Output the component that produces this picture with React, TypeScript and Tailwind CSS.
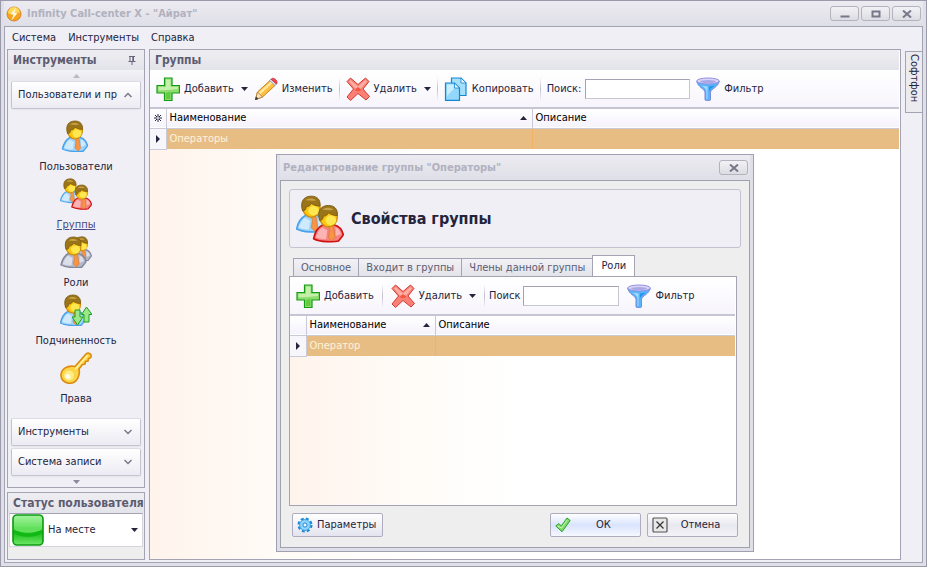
import type { ReactNode } from "react";

type Shirt = "blue" | "red" | "gray";

const shirts: Record<Shirt, { fill: string; light: string; line: string }> = {
  blue: { fill: "#9dd3fb", light: "#cfeafd", line: "#4aa3ea" },
  red: { fill: "#f98080", light: "#fbb3b3", line: "#cf1010" },
  gray: { fill: "#b4b8c8", light: "#dcdfe9", line: "#83879b" },
};

function Person({ shirt, transform }: { shirt: Shirt; transform?: string }) {
  const c = shirts[shirt];
  return (
    <g transform={transform}>
      <path d="M10 17.500 C6 19.500 3.500 24 2.500 29 C8 32 20 32 23.500 31 C25 29 27 27 27.500 25.500 C26.500 21.500 24 18.500 20 17.500 Z" fill={c.fill} stroke={c.line} strokeWidth="1.400" />
      <path d="M9.500 19.500 C7 21.500 5 25 4.300 28 C7 29 10 29.500 13 29.500 L14 22 Z M21 19.500 L21 27 L25.500 25 C25 22.500 23.500 20.500 21 19.500 Z" fill={c.light} />
      <path d="M15 18.500 L19 18.500 L20.500 28 L18 31 L15 28 L16 22 Z" fill="#f79545" stroke="#d9772c" strokeWidth="0.600" />
      <ellipse cx="15" cy="10.500" rx="7.500" ry="8.500" fill="#fcc713" stroke="#cf8d12" strokeWidth="1.200" />
      <ellipse cx="17" cy="13.500" rx="4.500" ry="4" fill="#ffe84f" />
      <path d="M7.500 13.500 C5 5 9 1 15 1 C20 1 23 4 22.500 9.500 C19 9.500 17 8.500 15 7 C14 10 11 10 10.500 10 C11 12 9 14 7.500 13.500 Z" fill="#9a7419" stroke="#7b5b12" strokeWidth="0.800" />
      <path d="M10 4.500 C12 2.500 17 2.500 19 4.500 C16 5.500 13 4.500 10 4.500 Z" fill="#c7a24a" />
    </g>
  );
}

function UserIcon() {
  return (
    <svg viewBox="0 0 32 32" className="size-8">
      <Person shirt="blue" />
    </svg>
  );
}

function GroupIcon({ className = "size-8" }: { className?: string }) {
  return (
    <svg viewBox="0 0 32 32" className={className}>
      <Person shirt="blue" transform="translate(-1.500 0) scale(0.780)" />
      <Person shirt="red" transform="translate(9.800 6.200) scale(0.790)" />
    </svg>
  );
}

function RolesIcon() {
  return (
    <svg viewBox="0 0 32 32" className="size-8">
      <Person shirt="gray" transform="translate(10 0) scale(0.780)" />
      <Person shirt="gray" transform="translate(-1.500 0)" />
    </svg>
  );
}

function SubordinationIcon() {
  return (
    <svg viewBox="0 0 32 32" className="size-8">
      <Person shirt="blue" transform="translate(-2 0)" />
      <path d="M15 16 H20 V23 H23 L17.500 31 L12 23 H15 Z" fill="#9be88b" stroke="#1f9f1c" />
      <path d="M24 28 H29 V20.500 H32 L26.500 13 L21.500 20.500 H24 Z" fill="#9be88b" stroke="#1f9f1c" />
    </svg>
  );
}

function KeyIcon() {
  return (
    <svg viewBox="0 0 32 32" className="size-8">
      <path d="M15 14.500 L26 2 C28 0 32 1.500 31 5 L30 6 L28.500 6.500 L28 9 L25.500 9.500 L25 12 L22.500 12.500 L19 17 C20.500 23 17 31 10 31.300 C4 31.500 0.700 27 1 22.500 C1.500 17 7 13 15 14.500 Z" fill="#fcd547" stroke="#dd8a10" strokeWidth="1.600" />
      <path d="M27.500 3.500 L15.500 17" stroke="#fff3a6" strokeWidth="1.600" />
      <circle cx="9" cy="23.500" r="5" fill="#ffec84" />
      <circle cx="8" cy="24.500" r="2.400" fill="#fffbe8" />
    </svg>
  );
}

function AddIcon() {
  return (
    <svg viewBox="0 0 24 24" className="size-6 shrink-0">
      <path d="M8.500 1 H16 V8.500 H23.500 V16 H16 V23.500 H8.500 V16 H1 V8.500 H8.500 Z" fill="#8fdc70" stroke="#169a16" strokeWidth="1.200" />
      <path d="M10 2.500 H14.500 V10 H22 V12 C16 12 10 14 2.500 13 V10 H10 Z" fill="#c5f0ac" />
      <path d="M10 16 L14.500 14.500 V22 H10 Z" fill="#62cb42" />
    </svg>
  );
}

function EditIcon() {
  return (
    <svg viewBox="0 0 24 24" className="size-6 shrink-0">
      <path d="M1.500 22.500 L3.500 15 L16.500 3 L21.500 8 L8.500 20 Z" fill="#fdbf3f" stroke="#c98224" />
      <path d="M4.500 15.500 L17 4.500 L18.500 6 L6 17.500 Z" fill="#ffeaa0" />
      <path d="M1.500 22.500 L3.500 15 L8.500 20 Z" fill="#fbe2b8" stroke="#a0702c" strokeWidth="0.700" />
      <path d="M1 23 L2 19.500 L4.500 22 Z" fill="#333" />
      <path d="M15.500 3.500 L17 2 L22.500 7 L21 8.500 Z" fill="#dfe3ef" stroke="#8d8fa0" strokeWidth="0.700" />
      <path d="M17.500 1.800 C19 0 24 3 23 6.300 L22.300 7 L17 2.300 Z" fill="#ee4850" stroke="#c42a38" strokeWidth="0.700" />
    </svg>
  );
}

function DeleteIcon() {
  return (
    <svg viewBox="0 0 24 24" className="size-6 shrink-0">
      <path d="M1 4.500 L4.500 1 L12 7.500 L19.500 1 L23 4.500 L17 12 L23.500 19.500 L20 23 L12 16.500 L4.500 23.500 L1 20 L7.500 12 Z" fill="#f98074" stroke="#d23a36" />
      <path d="M3 4.500 L4.500 3 L12 9.500 L19.500 3 L21 4.500 L15 11.500 L9 11.500 Z" fill="#fcaea2" />
      <path d="M12 10 L15.500 13 L12 14.500 L8.500 13 Z" fill="#f4573f" />
    </svg>
  );
}

function CopyIcon() {
  return (
    <svg viewBox="0 0 24 24" className="size-6 shrink-0">
      <path d="M7.500 1 H17 L22 6 V18.500 H7.500 Z" fill="#a5e0fb" stroke="#1487d4" strokeWidth="1.200" />
      <path d="M17 1 V6 H22 Z" fill="#eefaff" stroke="#1487d4" strokeWidth="0.800" />
      <path d="M1.500 6 H10.500 L15.500 11 V23.400 H1.500 Z" fill="#93d8fb" stroke="#1487d4" strokeWidth="1.200" />
      <path d="M3 7.500 H9.500 L10 11.500 L3 19 Z" fill="#c9eefd" />
      <path d="M10.500 6 V11 H15.500 Z" fill="#eefaff" stroke="#1487d4" strokeWidth="0.800" />
    </svg>
  );
}

function FilterIcon() {
  return (
    <svg viewBox="0 0 24 24" className="size-6 shrink-0">
      <path d="M0.700 4.500 C2 10 8.500 12 9 15 V23 C11 24 13 24 14.500 23 V15 C15 12 22 10 23.300 4.500 Z" fill="#58b4f8" stroke="#7a86e0" />
      <path d="M5 8.500 C9 10.500 10.500 12 10.500 15 V22 H11.500 V9.500 Z" fill="#a8dcff" />
      <path d="M13 9.500 L19 8.500 C15 11.500 13.500 13 13 15 Z" fill="#2496ee" />
      <ellipse cx="12" cy="4" rx="11.300" ry="3" fill="#d9d5f8" stroke="#958fe0" />
      <ellipse cx="12" cy="4.600" rx="8" ry="1.500" fill="#aaa7e6" />
    </svg>
  );
}

function LogoIcon() {
  return (
    <svg viewBox="0 0 16 16" className="size-4">
      <circle cx="8" cy="8" r="7" fill="#f9a21c" stroke="#c87a1c" strokeWidth="0.800" />
      <path d="M2 7 A6 6 0 0 1 14 7 C10 5 6 10 2 7 Z" fill="#ffd95a" />
      <path d="M10 1.500 L4.500 8.500 L7.500 8.500 L5.500 14.500 L11.500 7 L8.500 7 Z" fill="#fffbe0" />
    </svg>
  );
}

function GearIcon() {
  return (
    <svg viewBox="0 0 16 16" className="size-4 shrink-0">
      <circle cx="8" cy="8" r="6.300" fill="none" stroke="#1c88d6" strokeWidth="2.400" strokeDasharray="2.900 2.048" />
      <circle cx="8" cy="8" r="5.400" fill="#8fd4fa" stroke="#3ba2e6" />
      <circle cx="8" cy="8" r="2.100" fill="#f0f4fa" stroke="#1c88d6" />
    </svg>
  );
}

function CheckIcon() {
  return (
    <svg viewBox="0 0 16 16" className="size-4 shrink-0">
      <path d="M0.800 9 L3.800 6.500 L6.300 9 L12 1 L15.200 3.500 L7 14.800 Z" fill="#7fdc68" stroke="#2d9f2b" />
      <path d="M2.500 9 L6.500 11 L12 3" stroke="#c8f5b5" fill="none" />
    </svg>
  );
}

function CancelIcon() {
  return (
    <svg viewBox="0 0 16 16" className="size-4 shrink-0">
      <rect x="1" y="1" width="14" height="14" rx="1" fill="#e8e8e8" stroke="#555" strokeWidth="1.200" />
      <path d="M4.500 4.500 L11.500 11.500 M11.500 4.500 L4.500 11.500" stroke="#333" strokeWidth="1.200" />
    </svg>
  );
}

function Triangle({ up = false, className = "text-[#24243c]" }: { up?: boolean; className?: string }) {
  return (
    <svg viewBox="0 0 7 4" className={`h-1 w-[7px] shrink-0 ${className}`}>
      <path d={up ? "M0 4 L3.500 0 L7 4 Z" : "M0 0 L3.500 4 L7 0 Z"} fill="currentColor" />
    </svg>
  );
}

function RowMarker() {
  return (
    <svg viewBox="0 0 4 8" className="mx-auto h-2 w-1">
      <path d="M0 0 L4 4 L0 8 Z" fill="#24243c" />
    </svg>
  );
}

function AllRowsMarker() {
  return (
    <svg viewBox="0 0 8 8" className="mx-auto size-2" stroke="#24243c" fill="none">
      <path d="M4 0 V8 M0 4 H8 M1 1 L7 7 M7 1 L1 7" />
      <circle cx="4" cy="4" r="1" fill="#fff" stroke="none" />
    </svg>
  );
}

function WindowButton({ kind, label }: { kind: "min" | "max" | "close"; label: string }) {
  return (
    <button
      aria-label={label}
      className="flex h-[15px] w-[29px] items-center justify-center rounded-[3px] border border-[#b3b3bd] bg-gradient-to-b from-[#f2f2f5] to-[#dcdce3]"
    >
      <svg viewBox="0 0 10 8" className="h-2 w-2.5" fill="none" stroke="#77778a" strokeWidth="2">
        {kind === "min" && <path d="M0.500 6.500 H9.500" />}
        {kind === "max" && <rect x="1.500" y="1.500" width="7" height="5" />}
        {kind === "close" && <path d="M1 0.500 L9 7.500 M9 0.500 L1 7.500" />}
      </svg>
    </button>
  );
}

function PanelTitle({ children }: { children: ReactNode }) {
  return (
    <div className="flex h-5 shrink-0 items-center justify-between bg-gradient-to-b from-[#eeeef2] to-[#e3e3ea] pl-[5px] text-xs font-bold whitespace-nowrap text-[#5c5c70]">
      {children}
    </div>
  );
}

function Separator() {
  return <span className="h-6 w-px shrink-0 bg-gradient-to-b from-transparent via-[#c0c0ce] to-transparent" />;
}

function ToolButton({ icon, label, menu = false }: { icon: ReactNode; label: string; menu?: boolean }) {
  return (
    <button className="flex shrink-0 items-center gap-1">
      {icon}
      <span>{label}</span>
      {menu && <span className="ml-[3px]"><Triangle /></span>}
    </button>
  );
}

function NavGroup({ label, open = false }: { label: string; open?: boolean }) {
  return (
    <button
      aria-expanded={open}
      className="mx-[3px] flex h-7 shrink-0 items-center justify-between rounded-xs border border-[#c4c4d0] border-t-[#dcdce4] bg-gradient-to-b from-white to-[#ecebf3] px-1.5 shadow-xs"
    >
      <span className="whitespace-nowrap">{label}</span>
      <svg viewBox="0 0 8 6" className="mr-0.5 h-1.5 w-2" fill="none" stroke="#77778a" strokeWidth="1.500">
        <path d={open ? "M0.500 5 L4 1.500 L7.500 5" : "M0.500 1 L4 4.500 L7.500 1"} />
      </svg>
    </button>
  );
}

const navItems = [
  { label: "Пользователи", icon: <UserIcon /> },
  { label: "Группы", icon: <GroupIcon />, active: true },
  { label: "Роли", icon: <RolesIcon /> },
  { label: "Подчиненность", icon: <SubordinationIcon /> },
  { label: "Права", icon: <KeyIcon /> },
];

function Sidebar() {
  return (
    <div className="flex w-[138px] shrink-0 flex-col gap-1">
      <nav className="flex flex-1 flex-col border border-[#a3a3b3]">
        <PanelTitle>
          Инструменты
          <button aria-label="Закрепить">
            <svg viewBox="0 0 8 9" className="mr-2 h-[9px] w-2" fill="none" stroke="#66667a">
              <path d="M1 0.500 H7 M2 0.500 V5 M5.500 0.500 V5 M4.800 0.500 V5 M0.500 5.500 H7.500 M4 5.500 V9" />
            </svg>
          </button>
        </PanelTitle>
        <div className="flex h-[11px] shrink-0 items-center justify-center bg-gradient-to-b from-[#f3f2f7] to-[#e9e8f0]">
          <Triangle up className="text-[#b9b9c4]" />
        </div>
        <NavGroup label="Пользователи и пр" open />
        <ul className="flex flex-1 flex-col pt-[11px]">
          {navItems.map((item) => (
            <li key={item.label}>
              <button className="flex h-[58px] w-full flex-col items-center gap-[7px]">
                {item.icon}
                <span className={item.active ? "text-[#494980] underline" : ""}>{item.label}</span>
              </button>
            </li>
          ))}
        </ul>
        <div className="flex flex-col gap-0.5">
          <NavGroup label="Инструменты" />
          <NavGroup label="Система записи" />
        </div>
        <div className="flex h-[11px] shrink-0 items-center justify-center">
          <Triangle className="text-[#8a8a9a]" />
        </div>
      </nav>
      <section className="flex h-[68px] shrink-0 flex-col border border-[#a3a3b3] bg-[#eeeeee]">
        <PanelTitle>
          <label htmlFor="status">Статус пользователя</label>
        </PanelTitle>
        <div className="mx-px flex h-[34px] items-center border border-[#d5d5de] border-t-[#a3a3b3] bg-white px-0.5">
          <svg viewBox="0 0 32 32" className="size-8 shrink-0">
            <defs>
              <linearGradient id="lamp" x1="0" y1="0" x2="0" y2="1">
                <stop offset="0" stopColor="#a5f3a0" />
                <stop offset="0.500" stopColor="#5bdf55" />
                <stop offset="0.550" stopColor="#12b814" />
                <stop offset="1" stopColor="#6fe968" />
              </linearGradient>
            </defs>
            <rect x="1" y="1" width="30" height="30" rx="4" fill="url(#lamp)" stroke="#0b9a10" strokeWidth="1.600" />
            <path d="M2 15 C8 21 24 21 30 15 V19 C24 24 8 24 2 19 Z" fill="#12b814" />
            <path d="M2 15 C8 20 24 20 30 15 V13 H2 Z" fill="#62e05c" />
          </svg>
          <div className="relative ml-1 flex flex-1 items-center">
            <select id="status" className="w-full appearance-none bg-transparent pr-4 outline-none">
              <option>На месте</option>
            </select>
            <span className="pointer-events-none absolute right-0.5">
              <Triangle />
            </span>
          </div>
        </div>
      </section>
    </div>
  );
}

function DataGrid({ mark, firstColumn, value }: { mark?: ReactNode; firstColumn: string; value: string }) {
  return (
    <table className="w-full table-fixed border-collapse">
      <colgroup>
        <col className="w-4" />
        <col className={firstColumn} />
        <col />
      </colgroup>
      <thead>
        <tr className="h-[19px] border-b border-[#c9c9d8] bg-gradient-to-b from-white to-[#f5f3fb] text-left text-black">
          <th className="border-r border-[#c9c9d8] font-normal">{mark}</th>
          <th className="border-r border-[#c9c9d8] px-[3px] font-normal">
            <span className="flex items-center justify-between pr-0.5">
              Наименование
              <Triangle up />
            </span>
          </th>
          <th className="px-[3px] font-normal">Описание</th>
        </tr>
      </thead>
      <tbody>
        <tr className="h-[21px] bg-[#e7bd84] text-[#fdf3dc]">
          <td className="border-r border-b border-[#c9c9d8] bg-[#f7f6fb]">
            <RowMarker />
          </td>
          <td className="border-r border-[#f2b25f] px-[3px]">{value}</td>
          <td />
        </tr>
      </tbody>
    </table>
  );
}

const toolbar = "flex h-[39px] shrink-0 items-center border-b-2 border-[#c6c6d3] bg-gradient-to-b from-white to-[#f7f5fc]";
const searchBox = "h-5 border border-[#c6c6d3] border-t-[#a3a3b3] border-l-[#a3a3b3] bg-white px-1 outline-none";
const dialogButton = "flex h-6 w-[91px] items-center rounded-xs border border-[#adadbf] px-1";

function Dialog() {
  const tabs = ["Основное", "Входит в группы", "Члены данной группы"];
  return (
    <section
      role="dialog"
      aria-labelledby="dialog-title"
      className="absolute top-[153px] left-[275px] flex h-[398px] w-[478px] flex-col border border-[#a0a0b0] bg-[#dfdfe7] px-[3px] pb-[3px]"
    >
      <header className="flex h-[25px] shrink-0 items-center justify-between bg-gradient-to-b from-[#ecebf1] to-[#dfdfe7] pr-0.5 pl-[3px]">
        <h2 id="dialog-title" className="text-[11px] font-bold text-[#b1b1c0]">Редактирование группы "Операторы"</h2>
        <WindowButton kind="close" label="Закрыть окно" />
      </header>
      <div className="flex flex-1 flex-col border border-[#a0a0b0] bg-[#eeeeee] px-2 pt-2">
        <div className="flex h-[59px] shrink-0 items-center gap-[7px] rounded-[3px] border border-[#c3c3d0] bg-[#f0eff5] pl-1.5">
          <GroupIcon className="size-12" />
          <h1 className="text-base font-bold text-[#24243c]">Свойства группы</h1>
        </div>
        <div className="mt-[7px] mr-1 flex flex-1 flex-col">
          <div role="tablist" className="flex h-[21px] shrink-0 items-end px-1">
            {tabs.map((t) => (
              <button key={t} role="tab" aria-selected="false" className="h-[18px] border border-r-0 border-b-0 border-[#a3a3b3] bg-gradient-to-b from-[#f2f1f6] to-[#e3e3ea] px-[7px] whitespace-nowrap text-[#5c5c70]">
                {t}
              </button>
            ))}
            <button role="tab" aria-selected="true" className="h-[21px] border border-b-0 border-[#a3a3b3] bg-white px-2">Роли</button>
          </div>
          <div className="flex flex-1 flex-col border border-[#a3a3b3] bg-gradient-to-r from-[#fff4ec] via-[#fffcf8] via-30% to-white to-50% pr-px">
            <div className={`${toolbar} gap-2 pl-1.5`}>
              <ToolButton icon={<AddIcon />} label="Добавить" />
              <Separator />
              <ToolButton icon={<DeleteIcon />} label="Удалить" menu />
              <Separator />
              <div className="-ml-1 flex items-center gap-[3px]">
                <label htmlFor="role-search">Поиск</label>
                <input id="role-search" className={`${searchBox} w-24`} />
              </div>
              <ToolButton icon={<FilterIcon />} label="Фильтр" />
            </div>
            <DataGrid firstColumn="w-[129px]" value="Оператор" />
          </div>
        </div>
        <footer className="flex h-[41px] shrink-0 items-start gap-1.5 px-[3px] pt-[7px]">
          <button className={`${dialogButton} mr-auto gap-1 bg-gradient-to-b from-white to-[#e4e4f0]`}>
            <GearIcon />
            Параметры
          </button>
          <button className={`${dialogButton} bg-gradient-to-b from-white via-[#d9e3fd] to-[#f6f8ff]`}>
            <CheckIcon />
            <span className="flex-1">ОК</span>
          </button>
          <button className={`${dialogButton} bg-gradient-to-b from-white via-[#e8e8ef] to-[#f3f2f7]`}>
            <CancelIcon />
            <span className="flex-1">Отмена</span>
          </button>
        </footer>
      </div>
    </section>
  );
}

export default function App() {
  return (
    <div className="relative flex h-screen flex-col border border-[#9a9aab] bg-[#dfdfe7] px-[3px] pb-[3px] font-['DejaVu_Sans_Condensed','DejaVu_Sans',sans-serif] text-[11px] leading-4 text-[#24243c]">
      <header className="flex h-[25px] shrink-0 items-center justify-between bg-gradient-to-b from-[#ecebf1] to-[#dfdfe7] pr-0.5 pl-0.5">
        <div className="flex items-center gap-[5px]">
          <LogoIcon />
          <span className="text-[11px] font-bold text-[#b1b1c0]">Infinity Call-center X - "Айрат"</span>
        </div>
        <div className="flex gap-0.5">
          <WindowButton kind="min" label="Свернуть" />
          <WindowButton kind="max" label="Развернуть" />
          <WindowButton kind="close" label="Закрыть" />
        </div>
      </header>
      <div className="flex min-h-0 flex-1 flex-col border border-[#a3a3b3] bg-[#f0eff5]">
        <nav className="flex h-[22px] shrink-0 items-center gap-3 px-[7px]">
          <button>Система</button>
          <button>Инструменты</button>
          <button>Справка</button>
        </nav>
        <div className="flex min-h-0 flex-1 gap-1 pb-0.5 pl-0.5">
          <Sidebar />
          <main className="flex min-w-0 flex-1 flex-col border border-[#a3a3b3] bg-gradient-to-r from-[#fff4ec] via-[#fffcf8] via-20% to-white to-40% pr-px">
            <PanelTitle>Группы</PanelTitle>
            <div className={`${toolbar} gap-1.5 pl-1.5`}>
              <ToolButton icon={<AddIcon />} label="Добавить" menu />
              <ToolButton icon={<EditIcon />} label="Изменить" />
              <Separator />
              <ToolButton icon={<DeleteIcon />} label="Удалить" menu />
              <Separator />
              <ToolButton icon={<CopyIcon />} label="Копировать" />
              <Separator />
              <div className="flex items-center gap-1">
                <label htmlFor="group-search">Поиск:</label>
                <input id="group-search" className={`${searchBox} w-[105px]`} />
              </div>
              <ToolButton icon={<FilterIcon />} label="Фильтр" />
            </div>
            <DataGrid mark={<AllRowsMarker />} firstColumn="w-[366px]" value="Операторы" />
          </main>
          <button className="mt-0.5 flex h-[62px] w-[17px] shrink-0 items-center justify-start border border-r-0 border-[#a3a3b3] bg-[#ebebf0] pt-0.5 [writing-mode:vertical-rl]">
            Софтфон
          </button>
        </div>
      </div>
      <Dialog />
    </div>
  );
}
